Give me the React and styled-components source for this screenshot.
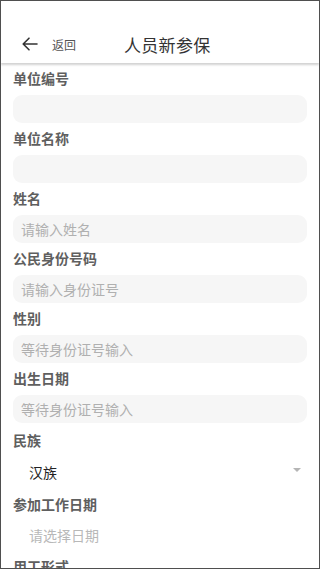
import React from 'react';
import styled, { createGlobalStyle } from 'styled-components';

const GlobalStyle = createGlobalStyle`
    html, body {
        margin: 0;
        padding: 0;
        background: #ffffff;
        font-family: "Noto Sans CJK SC", "Noto Sans", sans-serif;
    }
`;

const Screen = styled.div`
    width: 320px;
    height: 569px;
    box-sizing: border-box;
    border: 1px solid #4f4f4f;
    background: #ffffff;
    overflow: hidden;
    display: flex;
    flex-direction: column;
`;

const Header = styled.div`
    height: 62px;
    flex-shrink: 0;
    box-sizing: border-box;
    padding: 24px 0 0 21px;
    display: flex;
    align-items: center;
    background: #ffffff;
    box-shadow: 0 2px 2px rgba(0, 0, 0, 0.18);
    position: relative;
    z-index: 1;
`;

const Back = styled.div`
    display: flex;
    align-items: center;
    gap: 14px;
    color: #555;
    font-size: 12px;
`;

const Title = styled.div`
    margin-left: 48px;
    font-size: 17px;
    color: #333;
    letter-spacing: 0.3px;
`;

const Form = styled.div`
    padding: 5px 12px 0 12px;
    display: flex;
    flex-direction: column;
`;

const Label = styled.div`
    height: 20px;
    line-height: 20px;
    font-size: 14px;
    font-weight: bold;
    color: #5f5f5f;
    margin-top: ${p => p.gap}px;
`;

const Input = styled.div`
    height: 28px;
    margin-top: 7px;
    border-radius: 9px;
    background: #f6f6f6;
    box-sizing: border-box;
    padding-left: 8px;
    display: flex;
    align-items: center;
    font-size: 14px;
    color: #b0b0b0;
`;

const Select = styled.div`
    height: ${p => p.h}px;
    display: flex;
    align-items: center;
    justify-content: space-between;
    padding: 0 6px 0 16px;
    font-size: 14px;
    color: ${p => (p.muted ? '#b8b8b8' : '#222')};
`;

const Caret = styled.span`
    width: 0;
    height: 0;
    border-left: 4px solid transparent;
    border-right: 4px solid transparent;
    border-top: 4px solid #b5b5b5;
    margin-bottom: 4px;
`;

const fields = [
    { label: '单位编号', value: '' },
    { label: '单位名称', value: '' },
    { label: '姓名', value: '请输入姓名' },
    { label: '公民身份号码', value: '请输入身份证号' },
    { label: '性别', value: '等待身份证号输入' },
    { label: '出生日期', value: '等待身份证号输入' },
];

function App() {
    return (
        <>
            <GlobalStyle />
            <Screen>
                <Header>
                    <Back>
                        <svg width="16" height="14" viewBox="0 0 16 14" fill="none" stroke="#333" strokeWidth="1.6" strokeLinecap="round" strokeLinejoin="round">
                            <path d="M15 7H1.5M7 1.2L1.2 7l5.8 5.8" />
                        </svg>
                        <span>返回</span>
                    </Back>
                    <Title>人员新参保</Title>
                </Header>
                <Form>
                    {fields.map((f, i) => (
                        <React.Fragment key={i}>
                            <Label gap={i === 0 ? 0 : 5}>{f.label}</Label>
                            <Input>{f.value}</Input>
                        </React.Fragment>
                    ))}
                    <Label gap={7}>民族</Label>
                    <Select h={44}>
                        <span>汉族</span>
                        <Caret />
                    </Select>
                    <Label gap={0}>参加工作日期</Label>
                    <Select h={42} muted>
                        <span>请选择日期</span>
                    </Select>
                    <Label gap={0}>用工形式</Label>
                </Form>
            </Screen>
        </>
    );
}

export default App;
